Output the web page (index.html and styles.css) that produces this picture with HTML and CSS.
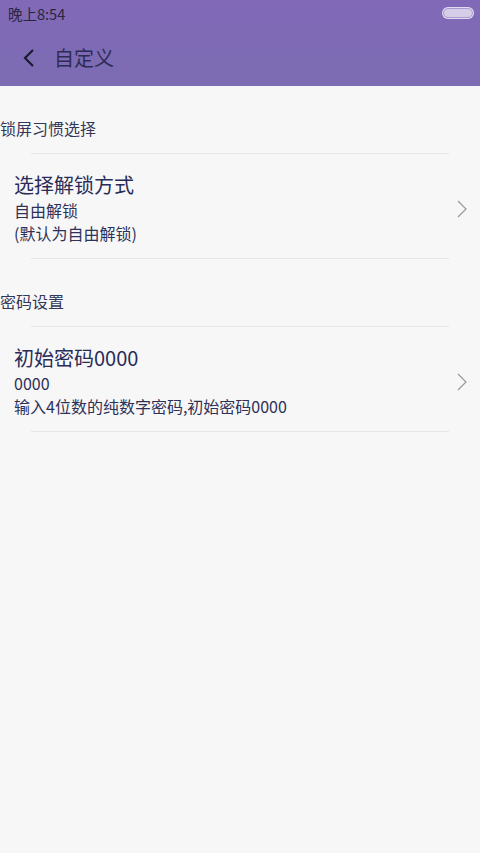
FILE: index.html
```html
<!DOCTYPE html>
<html lang="zh-CN">
<head>
    <meta charset="UTF-8">
    <meta name="viewport" content="width=device-width, initial-scale=1.0">
    <title>自定义</title>
    <link rel="stylesheet" href="styles.css">
</head>
<body>
    <div class="header">
        <div class="status-bar">
            <span class="time">晚上8:54</span>
            <span class="battery"></span>
        </div>
        <div class="toolbar">
            <svg class="back" width="14" height="20" viewBox="0 0 14 20">
                <path d="M11 2 L3 10 L11 18" fill="none" stroke="#1c1b2e" stroke-width="2.2"/>
            </svg>
            <span class="title">自定义</span>
        </div>
    </div>

    <div class="section-title">锁屏习惯选择</div>
    <div class="divider"></div>
    <div class="item">
        <div class="item-text">
            <div class="item-title">选择解锁方式</div>
            <div class="item-sub">自由解锁</div>
            <div class="item-sub">(默认为自由解锁)</div>
        </div>
        <svg class="arrow" width="10" height="18" viewBox="0 0 10 18">
            <path d="M1 1 L9 9 L1 17" fill="none" stroke="#9a9a9a" stroke-width="1.2"/>
        </svg>
    </div>
    <div class="divider"></div>

    <div class="section-title">密码设置</div>
    <div class="divider"></div>
    <div class="item">
        <div class="item-text">
            <div class="item-title">初始密码0000</div>
            <div class="item-sub">0000</div>
            <div class="item-sub">输入4位数的纯数字密码,初始密码0000</div>
        </div>
        <svg class="arrow" width="10" height="18" viewBox="0 0 10 18">
            <path d="M1 1 L9 9 L1 17" fill="none" stroke="#9a9a9a" stroke-width="1.2"/>
        </svg>
    </div>
    <div class="divider"></div>
</body>
</html>
```

FILE: styles.css
```css
body {
    margin: 0;
    background: #f7f7f7;
    font-family: "Noto Sans CJK SC", "Noto Sans", sans-serif;
    color: #2c2e55;
    min-height: 853px;
}
.header {
    background: linear-gradient(#8169b7, #7c6cb3);
    height: 86px;
}
.status-bar {
    height: 28px;
    display: flex;
    align-items: center;
    justify-content: space-between;
    padding: 0 7px 0 8px;
}
.time {
    font-size: 14.5px;
    color: #2a2540;
    line-height: 21px;
    margin-top: -2px;
}
.battery {
    width: 28px;
    height: 8px;
    border-radius: 5px;
    background: #d6cde9;
    border: 1px solid #a99bd0;
    box-shadow: 0 0 0 1px #e3dcf2;
    margin-top: -2px;
}
.toolbar {
    height: 58px;
    display: flex;
    align-items: center;
    padding-left: 22px;
}
.back {
    margin-top: 1px;
}
.title {
    font-size: 20px;
    margin-left: 18px;
    color: #2d2b55;
    line-height: 29px;
}
.section-title {
    font-size: 16px;
    line-height: 23px;
    margin-top: 31px;
    margin-bottom: 13px;
    color: #343757;
}
.divider {
    height: 1px;
    background: #e6e6e8;
    margin: 0 31px;
}
.item {
    display: flex;
    align-items: center;
    justify-content: space-between;
    padding: 16px 14px 13px 14px;
}
.item-title {
    font-size: 20px;
    line-height: 29px;
    color: #2a2c58;
}
.item-sub {
    font-size: 16px;
    line-height: 23px;
    color: #2e3158;
}
.arrow {
    margin-top: 2px;
    margin-right: -1px;
}
```
